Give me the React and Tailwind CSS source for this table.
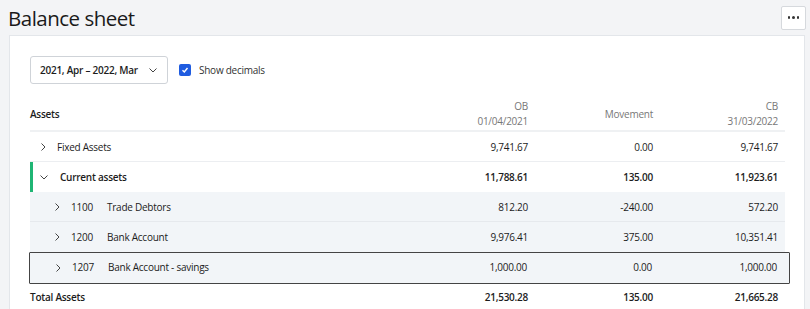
import React from "react";

const Right = ({ className = "" }) => (
  <svg width="8" height="10" viewBox="0 0 8 10" className={className}>
    <polyline points="2.5,1.5 6,5 2.5,8.5" fill="none" stroke="#444" strokeWidth="1" />
  </svg>
);
const Down = ({ className = "" }) => (
  <svg width="10" height="8" viewBox="0 0 10 8" className={className}>
    <polyline points="1.5,2.5 5,6 8.5,2.5" fill="none" stroke="#444" strokeWidth="1" />
  </svg>
);

function Row({ children, ob, mv, cb, bold, className = "" }) {
  return (
    <div className={`flex items-center ${bold ? "font-semibold" : ""} ${className}`}>
      <div className="flex-1 flex items-center min-w-0">{children}</div>
      <div className="w-[125px] text-right">{ob}</div>
      <div className="w-[125px] text-right">{mv}</div>
      <div className="w-[125px] text-right">{cb}</div>
      <div className="w-[7px]" />
    </div>
  );
}

export default function App() {
  return (
    <div
      className="h-[309px] overflow-hidden bg-[#f3f4f6] text-[#1c1c1c]"
      style={{ fontFamily: '"Open Sans", "Noto Sans", sans-serif' }}
    >
      <div className="flex items-center justify-between h-[35px] pl-[8px] pr-[4px]">
        <div className="text-[20.5px] leading-none tracking-[-0.5px] text-[#1a1a1a] pt-[1px]">Balance sheet</div>
        <div className="w-[25px] h-[24px] bg-white border border-[#d6d9dd] rounded-[2px] flex items-center justify-center gap-[2px]">
          <span className="w-[2.5px] h-[2.5px] bg-[#333] rounded-full" />
          <span className="w-[2.5px] h-[2.5px] bg-[#333] rounded-full" />
          <span className="w-[2.5px] h-[2.5px] bg-[#333] rounded-full" />
        </div>
      </div>
      <div className="ml-[9px] mr-[5px] bg-white border border-[#e3e6ea] h-[300px] pl-[20px] pr-[19px] pt-[20px] text-[10px] tracking-[-0.25px]">
        <div className="flex items-center">
          <div className="w-[138px] h-[28px] border border-[#cfd3d8] rounded-[3px] flex items-center justify-between pl-[9px] pr-[9px] font-semibold whitespace-nowrap">
            <span>2021, Apr – 2022, Mar</span>
            <Down />
          </div>
          <div className="ml-[11px] w-[12px] h-[12px] bg-[#1f5ce0] rounded-[2px] flex items-center justify-center">
            <svg width="8" height="8" viewBox="0 0 8 8">
              <polyline points="1.5,4.2 3.3,6 6.5,2" fill="none" stroke="white" strokeWidth="1.4" />
            </svg>
          </div>
          <span className="ml-[8px] text-[#333]">Show decimals</span>
        </div>
        <div className="mt-[14px] flex items-center h-[34px] border-b-2 border-[#eff1f3] leading-[15px]">
          <div className="flex-1 font-semibold">Assets</div>
          <div className="w-[125px] text-right text-[#777] flex flex-col">
            <span>OB</span>
            <span>01/04/2021</span>
          </div>
          <div className="w-[125px] text-right text-[#777]">Movement</div>
          <div className="w-[125px] text-right text-[#777] flex flex-col">
            <span>CB</span>
            <span>31/03/2022</span>
          </div>
          <div className="w-[7px]" />
        </div>
        <Row ob="9,741.67" mv="0.00" cb="9,741.67" className="border-b border-[#eceef1] h-[30px] pt-[1px]">
          <Right className="ml-[9px]" />
          <span className="ml-[10px]">Fixed Assets</span>
        </Row>
        <Row bold ob="11,788.61" mv="135.00" cb="11,923.61" className="border-l-[3px] border-[#1fb574] h-[30px]">
          <Down className="ml-[6px]" />
          <span className="ml-[11px]">Current assets</span>
        </Row>
        <Row ob="812.20" mv="-240.00" cb="572.20" className="bg-[#f2f5f8] border-b border-[#e6e9ed] h-[30px] pt-[1px]">
          <Right className="ml-[23px]" />
          <span className="ml-[10px] w-[36px]">1100</span>
          <span>Trade Debtors</span>
        </Row>
        <Row ob="9,976.41" mv="375.00" cb="10,351.41" className="bg-[#f2f5f8] h-[30px]">
          <Right className="ml-[23px]" />
          <span className="ml-[10px] w-[36px]">1200</span>
          <span>Bank Account</span>
        </Row>
        <div className="-ml-[1px] -mr-[5px] border border-[#444] rounded-[1px] bg-[#f2f5f8]">
          <div className="pl-[1px] pr-[5px]">
            <Row ob="1,000.00" mv="0.00" cb="1,000.00" className="h-[30px] pb-[1px]">
              <Right className="ml-[23px]" />
              <span className="ml-[10px] w-[36px]">1207</span>
              <span>Bank Account - savings</span>
            </Row>
          </div>
        </div>
        <Row bold ob="21,530.28" mv="135.00" cb="21,665.28" className="h-[26px]">
          <span>Total Assets</span>
        </Row>
      </div>
    </div>
  );
}
